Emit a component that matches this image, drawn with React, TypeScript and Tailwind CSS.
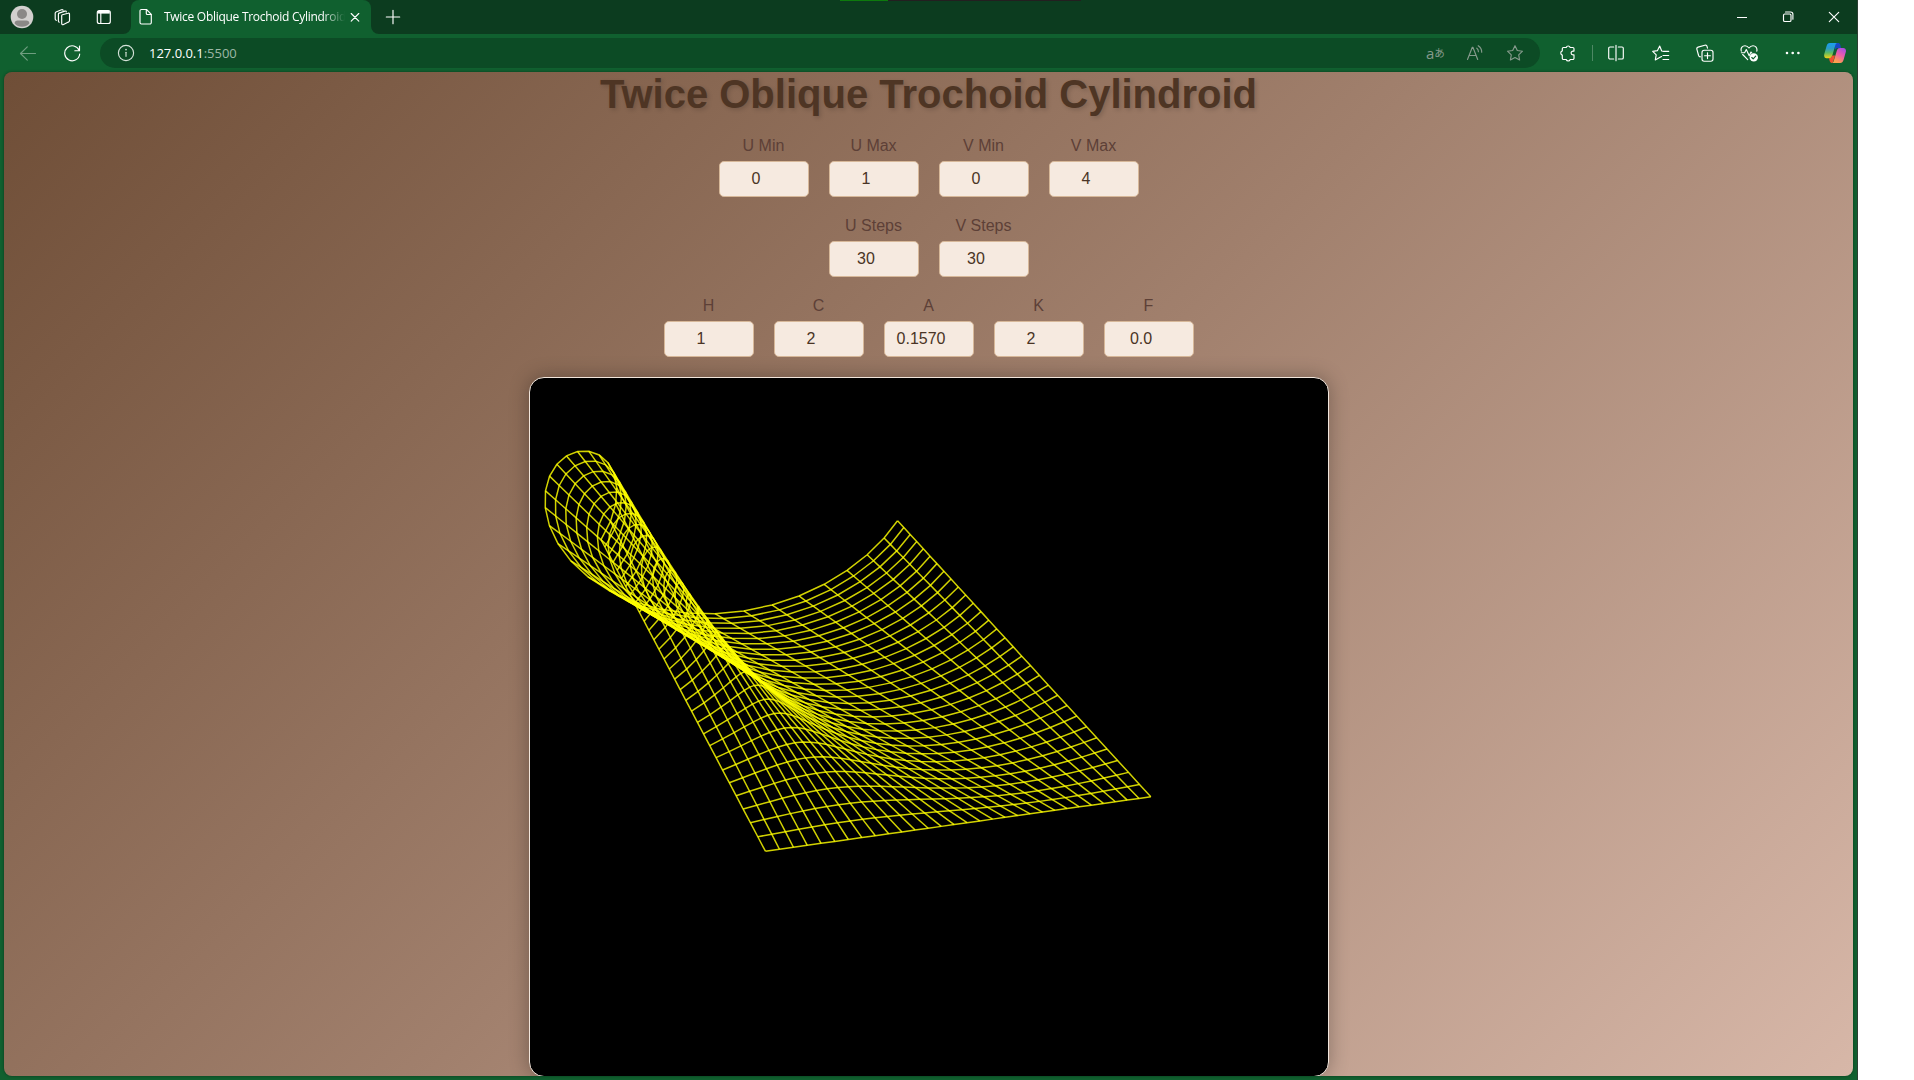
import React from "react";

/* ---------- surface geometry ---------- */

const STEPS = 30;
const OMEGA = 1.587696 * 4;
const BASE = [-0.256929, 0.316887, -0.526825];
const BASE_DIR = [0.642029, -0.063403, 0.046046];
const TOP = [-0.923333, -0.228787, -0.355447];
const TOP_DIR = [0.652548, -0.046562, 0.040254];
const TOP_COS = [0.196129, -0.017266, 0.022014];
const TOP_SIN = [0.042211, -0.176839, -0.027269];

// Projects the ruled surface point (u, v) into the canvas.
function project(k: number, j: number): string {
  const u = k / STEPS;
  const t = j / STEPS;
  const c = Math.cos(OMEGA * t);
  const s = Math.sin(OMEGA * t);
  const [x, y, w] = [0, 1, 2].map(
    (i) => (1 - u) * (BASE[i] + BASE_DIR[i] * t) + u * (TOP[i] + TOP_DIR[i] * t + TOP_COS[i] * c + TOP_SIN[i] * s),
  );
  return `${(398.3 + (300 * x) / (w + 1)).toFixed(2)},${(272.3 + (300 * y) / (w + 1)).toFixed(2)}`;
}

const range = Array.from({ length: STEPS + 1 }, (_, i) => i);
const wires = [
  ...range.map((a) => range.map((b) => project(a, b)).join(" ")),
  ...range.map((a) => range.map((b) => project(b, a)).join(" ")),
];

function Surface() {
  return (
    <div className="mt-5 h-[700px] w-[800px] shrink-0 overflow-hidden rounded-[15px] border border-[#f2e6dc] bg-black shadow-[0_0_20px_rgba(0,0,0,0.3)]">
      <svg width="798" height="698" viewBox="0 0 798 698" fill="none" stroke="#ffff00" strokeWidth="1.5" strokeOpacity="0.82">
        {wires.map((points, i) => (
          <polyline key={i} points={points} />
        ))}
      </svg>
    </div>
  );
}

/* ---------- form ---------- */

const rows: [string, string][][] = [
  [["U Min", "0"], ["U Max", "1"], ["V Min", "0"], ["V Max", "4"]],
  [["U Steps", "30"], ["V Steps", "30"]],
  [["H", "1"], ["C", "2"], ["A", "0.1570"], ["K", "2"], ["F", "0.0"]],
];

function Field({ label, value }: { label: string; value: string }) {
  return (
    <label className="flex w-[90px] flex-col text-center text-[16px] text-[#5d4037]">
      <span className="h-[25px] pt-px leading-[18px]">{label}</span>
      <span className="flex h-9 items-center justify-center rounded-[5px] border border-[#d7b899] bg-[#f6eae0] pr-[15px] leading-[18px] text-[#4a3425]">
        {value}
      </span>
    </label>
  );
}

/* ---------- browser chrome ---------- */

type IconProps = { className?: string; children: React.ReactNode; size?: number };
function Icon({ className = "", children, size = 18 }: IconProps) {
  return (
    <svg
      width={size}
      height={size}
      viewBox={`0 0 ${size} ${size}`}
      fill="none"
      stroke="currentColor"
      strokeWidth="1.15"
      strokeLinecap="round"
      strokeLinejoin="round"
      className={`shrink-0 ${className}`}
    >
      {children}
    </svg>
  );
}

function TabBar() {
  return (
    <div className="flex h-[34px] items-center bg-[#0c3c1f] text-white">
      <svg width="24" height="24" viewBox="0 0 24 24" className="ml-[10px] shrink-0">
        <circle cx="12" cy="12" r="11.3" fill="#d2d0ce" />
        <circle cx="12" cy="9" r="5" fill="#8a8886" />
        <path d="M4.600 18.400c0-2 1.400-2.900 3-2.900h8.800c1.600 0 3 .9 3 2.900a10 10 0 0 1-14.800 0z" fill="#8a8886" />
      </svg>
      <Icon className="ml-[19px]">
        <path d="M9.300 6.800L15 5.200c.9-.3 1.500.2 1.500 1v6.300c0 .8-.4 1.300-1.100 1.600l-4.900 2.400c-1 .5-1.800 0-1.800-1V7.700c0-.5.200-.8.600-.9z" />
        <path d="M6.300 14.200c-.6-.1-.9-.5-.9-1.100V6.200c0-.5.200-.9.700-1.100l5.700-2c.8-.3 1.400 0 1.500.8" />
        <path d="M3.300 12.300c-.7-.1-1.100-.5-1.100-1.200V5.200c0-.6.300-1 .8-1.200l5.500-2.200c.8-.3 1.400-.1 1.600.5" />
      </Icon>
      <Icon className="ml-6">
        <rect x="2.300" y="2.500" width="13" height="13" rx="2" />
        <path d="M2.800 4.300h12" strokeWidth="2.600" strokeLinecap="butt" />
        <path d="M5.800 5v10.500" />
      </Icon>
      <div className="relative ml-[18px] flex h-[34px] w-[240px] items-center rounded-t-[8px] bg-[#10602f]">
        <svg width="8" height="8" className="absolute bottom-0 -left-2" fill="#10602f">
          <path d="M8 0v8H0a8 8 0 0 0 8-8z" />
        </svg>
        <svg width="8" height="8" className="absolute -right-2 bottom-0" fill="#10602f">
          <path d="M0 0v8h8a8 8 0 0 1-8-8z" />
        </svg>
        <Icon className="ml-1.5">
          <path d="M4.500 1.500h5l4.800 4.800v8.200a1.500 1.500 0 0 1-1.500 1.500H4.500A1.500 1.500 0 0 1 3 14.500V3a1.500 1.500 0 0 1 1.500-1.500z" />
          <path d="M9.300 1.700V5.500a1 1 0 0 0 1 1h3.800" />
        </Icon>
        <div className="ml-[9px] w-[184px] shrink-0 text-[12px] leading-[18px] tracking-[-0.28px] whitespace-nowrap [mask-image:linear-gradient(to_right,black_158px,transparent_181px)]">
          Twice Oblique Trochoid Cylindroid
        </div>
        <Icon className="ml-px" size={12}>
          <path d="M2.200 2.500l7.600 7.600M9.800 2.500l-7.600 7.600" />
        </Icon>
      </div>
      <Icon className="ml-[14px]" size={16}>
        <path d="M8 1.300v13.400M1.300 8h13.400" />
      </Icon>
      <div className="ml-[439px] flex w-[241px] self-start">
        <div className="h-px w-12 bg-[#0e7a0d]" />
        <div className="h-px w-[193px] bg-[#231f20]" />
      </div>
      <Icon className="ml-auto" size={12}>
        <path d="M1 6.500h10" strokeLinecap="butt" strokeWidth="1" />
      </Icon>
      <Icon className="ml-[34px]" size={12}>
        <rect x="1.500" y="3" width="7.500" height="7.500" rx="1.300" />
        <path d="M3.500 1h5.200a2.200 2.200 0 0 1 2.200 2.200v5" />
      </Icon>
      <Icon className="mr-[17px] ml-[34px]" size={12}>
        <path d="M1.300 1.300l9.400 9.400M10.700 1.300l-9.400 9.400" />
      </Icon>
    </div>
  );
}

function CopilotLogo() {
  return (
    <svg width="22" height="20" viewBox="0 0 22 20" className="ml-[22px] shrink-0">
      <defs>
        <linearGradient id="cpA" x1="0" y1="0" x2="0" y2="1">
          <stop offset="0" stopColor="#1b9df0" />
          <stop offset=".35" stopColor="#2a9cc8" />
          <stop offset=".65" stopColor="#5dbb63" />
          <stop offset="1" stopColor="#f4d313" />
        </linearGradient>
        <linearGradient id="cpB" x1="1" y1="0" x2="0.500" y2="1">
          <stop offset="0" stopColor="#9a4bea" />
          <stop offset=".5" stopColor="#e85bae" />
          <stop offset="1" stopColor="#ffa04d" />
        </linearGradient>
      </defs>
      <path d="M11 0h3.300c1 0 1.600.7 1.900 1.600L17 5h-3.500c-1.500 0-2.200 1-2.600 2.300z" fill="#1747c4" />
      <path d="M5.800 0h7.700c-1.300 0-1.800.9-2.200 2.200L8.300 12.600c-.5 1.700-1.300 2.600-3 2.600H2.600C.5 15.200-.3 13.400.3 11L2.600 3C3.200 1 4.100 0 5.800 0z" fill="url(#cpA)" />
      <path d="M5 15.200c1.700 0 2.800-.9 3.300-2.600l2.800 0-1.800 5.600c-.4 1.200-1 1.800-1.600 1.800-1 0-1.700-.8-2-1.900z" fill="#f0502f" />
      <path d="M16.200 5h3c2.300 0 3.200 1.800 2.600 4.100L19.500 17c-.6 2-1.600 3-3.300 3H7.700c1.200 0 1.700-.9 2.100-2.200l3.100-10.300C13.400 5.800 14.400 5 16.200 5z" fill="url(#cpB)" />
    </svg>
  );
}

function Toolbar() {
  return (
    <div className="flex h-[38px] items-center text-white">
      <Icon className="ml-[19px] text-[#6f9e80]">
        <path d="M16.500 9.500H1.700M8.300 2.800L1.500 9.500l6.800 6.700" />
      </Icon>
      <Icon className="ml-[26px]">
        <path d="M16.200 6.500A7.500 7.500 0 1 0 16.700 10" />
        <path d="M16.500 2v4.700h-4.700" />
      </Icon>
      <div className="ml-[19px] flex h-[30px] w-[1440px] items-center rounded-full bg-[#0c4b25]">
        <Icon className="ml-[17px] text-[#d5e2d9]">
          <circle cx="9" cy="9" r="7.600" />
          <path d="M9 8.300v4" />
          <path d="M9 5.500v.2" strokeWidth="1.600" />
        </Icon>
        <div className="ml-[14px] text-[13px] leading-[18px] tracking-[-0.02px]">
          127.0.0.1<span className="text-[#9db7a6]">:5500</span>
        </div>
        <div className="ml-auto flex w-[18px] items-center text-[#869a8c]">
          <span className="text-[15px] leading-none">a</span>
          <span className="font-['Noto_Sans_CJK_JP'] text-[10.5px] leading-none">あ</span>
        </div>
        <Icon className="ml-[22px] text-[#869a8c]">
          <path d="M1.500 15.500L6.300 3.300h.6l4.800 12.200M3.200 11.500h6.800" />
          <path d="M10.800 4.200a4.500 4.500 0 0 1 1.600 3.500M12.200 1.700a7.500 7.500 0 0 1 3.500 6.500" />
        </Icon>
        <Icon className="mr-4 ml-[22px] text-[#869a8c]">
          <path d="M9 1.700l2.300 4.800 5.200.7-3.800 3.600.9 5.200L9 13.500 4.400 16l.9-5.200L1.500 7.200l5.200-.7z" />
        </Icon>
      </div>
      <Icon className="ml-[19px]">
        <path d="M4.500 3.500h2.700a2.100 2.100 0 0 1 4 0h2.600a1.200 1.200 0 0 1 1.200 1.200v2.400h-1a1.900 1.900 0 0 0 0 3.800h1v3.400a1.200 1.200 0 0 1-1.200 1.200h-2.600a2.100 2.100 0 0 1-4 0H4.500a1.200 1.200 0 0 1-1.200-1.200v-3.200a2.200 2.200 0 0 1 0-4.200V4.700a1.200 1.200 0 0 1 1.200-1.200z" />
      </Icon>
      <div className="ml-[15px] h-4 w-px bg-[#4d8864]" />
      <Icon className="ml-[14px]">
        <path d="M6.700 3H3a1.300 1.300 0 0 0-1.300 1.300v9.400A1.300 1.300 0 0 0 3 15h3.700M11.300 3H15a1.300 1.300 0 0 1 1.300 1.300v9.400A1.300 1.300 0 0 1 15 15h-3.700M9 1.300v15.400" />
      </Icon>
      <Icon className="ml-[27px]">
        <path d="M16.700 7.400h-5l-2-.4L7.700 2 5.500 6.600l-4.800.8 3.500 3.500-.9 5 4.300-2.300 2-1M11 11.500h5.700M11 15.500h5.700" />
      </Icon>
      <Icon className="ml-[26px]">
        <rect x="6" y="6.200" width="11" height="11" rx="2.200" />
        <path d="M11.500 8.800v5.800M8.600 11.700h5.800" />
        <path d="M4.500 12.800c-1 .1-1.600-.4-1.900-1.300L.9 5.300c-.3-1 .2-1.900 1.200-2.200l6.700-1.900c1-.3 1.900.2 2.200 1.200l.5 1.800" />
      </Icon>
      <Icon className="ml-[26px]">
        <path d="M1.300 7.200C.3 3.600 2.700 1.700 5 1.700c1.800 0 3 .9 4 2.300 1-1.400 2.200-2.300 4-2.300 2.300 0 4.600 1.900 3.800 5.500M2.700 10.500L7.700 15.600M1.300 8.700h3.300L6.300 5.500l2.900 6.200L11 8l.8 1" />
        <circle cx="13.800" cy="13.400" r="4.200" fill="currentColor" stroke="none" />
        <path d="M11.800 13.500l1.400 1.400 2.500-2.700" stroke="#10602f" />
      </Icon>
      <Icon className="ml-[26px]">
        <path d="M3 9h.01M8.700 9h.01M14.400 9h.01" strokeWidth="2.600" />
      </Icon>
      <CopilotLogo />
    </div>
  );
}

/* ---------- page ---------- */

export default function App() {
  return (
    <div className="h-[1080px] w-[1914px] overflow-hidden bg-white">
      <div className="flex h-full w-[1858px] flex-col border-r border-[#2c3f33] bg-[#10602f] font-['Open_Sans','Noto_Sans',sans-serif]">
        <TabBar />
        <Toolbar />
        <main className="mx-1 mb-1 flex h-[1004px] w-[1849px] flex-col items-center overflow-hidden rounded-[8px] bg-[linear-gradient(135deg,#6f4e37,#a1806d,#d7b7a8)] font-['Liberation_Sans',Arial,sans-serif] shadow-[0_0_3px_rgba(0,0,0,0.4)]">
          <h1 className="h-[46px] shrink-0 text-[40px] leading-[44px] font-bold whitespace-nowrap text-[#4e3524] [text-shadow:2px_2px_4px_rgba(0,0,0,0.15)]">
            Twice Oblique Trochoid Cylindroid
          </h1>
          <div className="mt-[18px] flex shrink-0 flex-col items-center gap-[19px]">
            {rows.map((row, i) => (
              <div key={i} className="flex gap-5">
                {row.map(([label, value]) => (
                  <Field key={label} label={label} value={value} />
                ))}
              </div>
            ))}
          </div>
          <Surface />
        </main>
      </div>
    </div>
  );
}
